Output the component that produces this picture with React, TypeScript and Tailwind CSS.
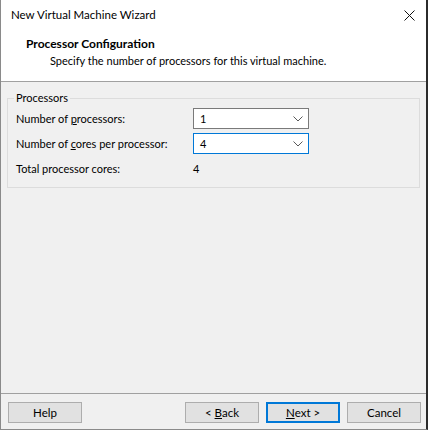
const Chevron = () => (
  <svg width="10" height="6" viewBox="0 0 10 6" className="shrink-0">
    <polyline points="0.5,0.5 5,5 9.5,0.5" fill="none" stroke="#5a5a5a" strokeWidth="1" />
  </svg>
);

interface ComboProps {
  value: string;
  focused?: boolean;
}

const Combo = ({ value, focused }: ComboProps) => (
  <div
    className={`flex h-[21px] w-[116px] items-center justify-between bg-white pl-[6px] pr-[5px] ${
      focused ? 'border border-[#0078d7]' : 'border border-[#7a7a7a]'
    }`}
  >
    <span>{value}</span>
    <Chevron />
  </div>
);

interface ButtonProps {
  children: React.ReactNode;
  primary?: boolean;
}

const WizardButton = ({ children, primary }: ButtonProps) => (
  <button
    type="button"
    className={`flex h-[21px] w-[74px] items-center justify-center whitespace-pre bg-[#e1e1e1] text-[11.5px] text-black ${
      primary ? 'border-2 border-[#0078d7]' : 'border border-[#adadad]'
    }`}
  >
    {children}
  </button>
);

export default function App() {
  return (
    <div
      className="flex h-[430px] w-[428px] flex-col border-l border-r-2 border-b border-l-[#8a8a8a] border-r-[#2b2b2b] border-b-[#8a8a8a] bg-[#f0f0f0] text-[11px] leading-[16px] text-black"
      style={{ fontFamily: 'Lato, "Liberation Sans", sans-serif' }}
    >
      {/* title bar */}
      <div className="flex h-[30px] items-center justify-between bg-white pl-[10px] pr-[11px] text-[11.5px]">
        <span>New Virtual Machine Wizard</span>
        <svg width="11" height="11" viewBox="0 0 11 11">
          <path d="M0.5 0.5 L10.5 10.5 M10.5 0.5 L0.5 10.5" stroke="#111" strokeWidth="1" />
        </svg>
      </div>

      {/* header */}
      <div className="h-[52px] border-b border-[#a0a0a0] bg-white pt-[6px]">
        <p className="pl-[25px] text-[12px] font-bold">Processor Configuration</p>
        <p className="mt-[1px] pl-[49px]">Specify the number of processors for this virtual machine.</p>
      </div>

      {/* body */}
      <div className="flex-1 px-[6px] pt-[8px]">
        <fieldset className="border border-[#dcdcdc] pb-[10px] pl-[8px] pr-[8px]">
          <legend className="-ml-[2px] px-[2px]">Processors</legend>
          <div className="mt-[2px] flex flex-col">
            <div className="flex h-[21px] items-center">
              <span className="w-[177px]">
                Number of <span className="underline">p</span>rocessors:
              </span>
              <Combo value="1" />
            </div>
            <div className="mt-[4px] flex h-[21px] items-center">
              <span className="w-[177px]">
                Number of <span className="underline">c</span>ores per processor:
              </span>
              <Combo value="4" focused />
            </div>
            <div className="mt-[7px] flex items-center">
              <span className="w-[177px]">Total processor cores:</span>
              <span>4</span>
            </div>
          </div>
        </fieldset>
      </div>

      {/* footer */}
      <div className="flex h-[36px] items-start justify-between border-t border-[#a0a0a0] pl-[7px] pr-[5px] pt-[8px]">
        <WizardButton>Help</WizardButton>
        <div className="flex gap-[7px]">
          <WizardButton>
            {'< '}
            <span className="underline">B</span>
            {'ack'}
          </WizardButton>
          <WizardButton primary>
            <span className="underline">N</span>
            {'ext >'}
          </WizardButton>
          <WizardButton>Cancel</WizardButton>
        </div>
      </div>
    </div>
  );
}
